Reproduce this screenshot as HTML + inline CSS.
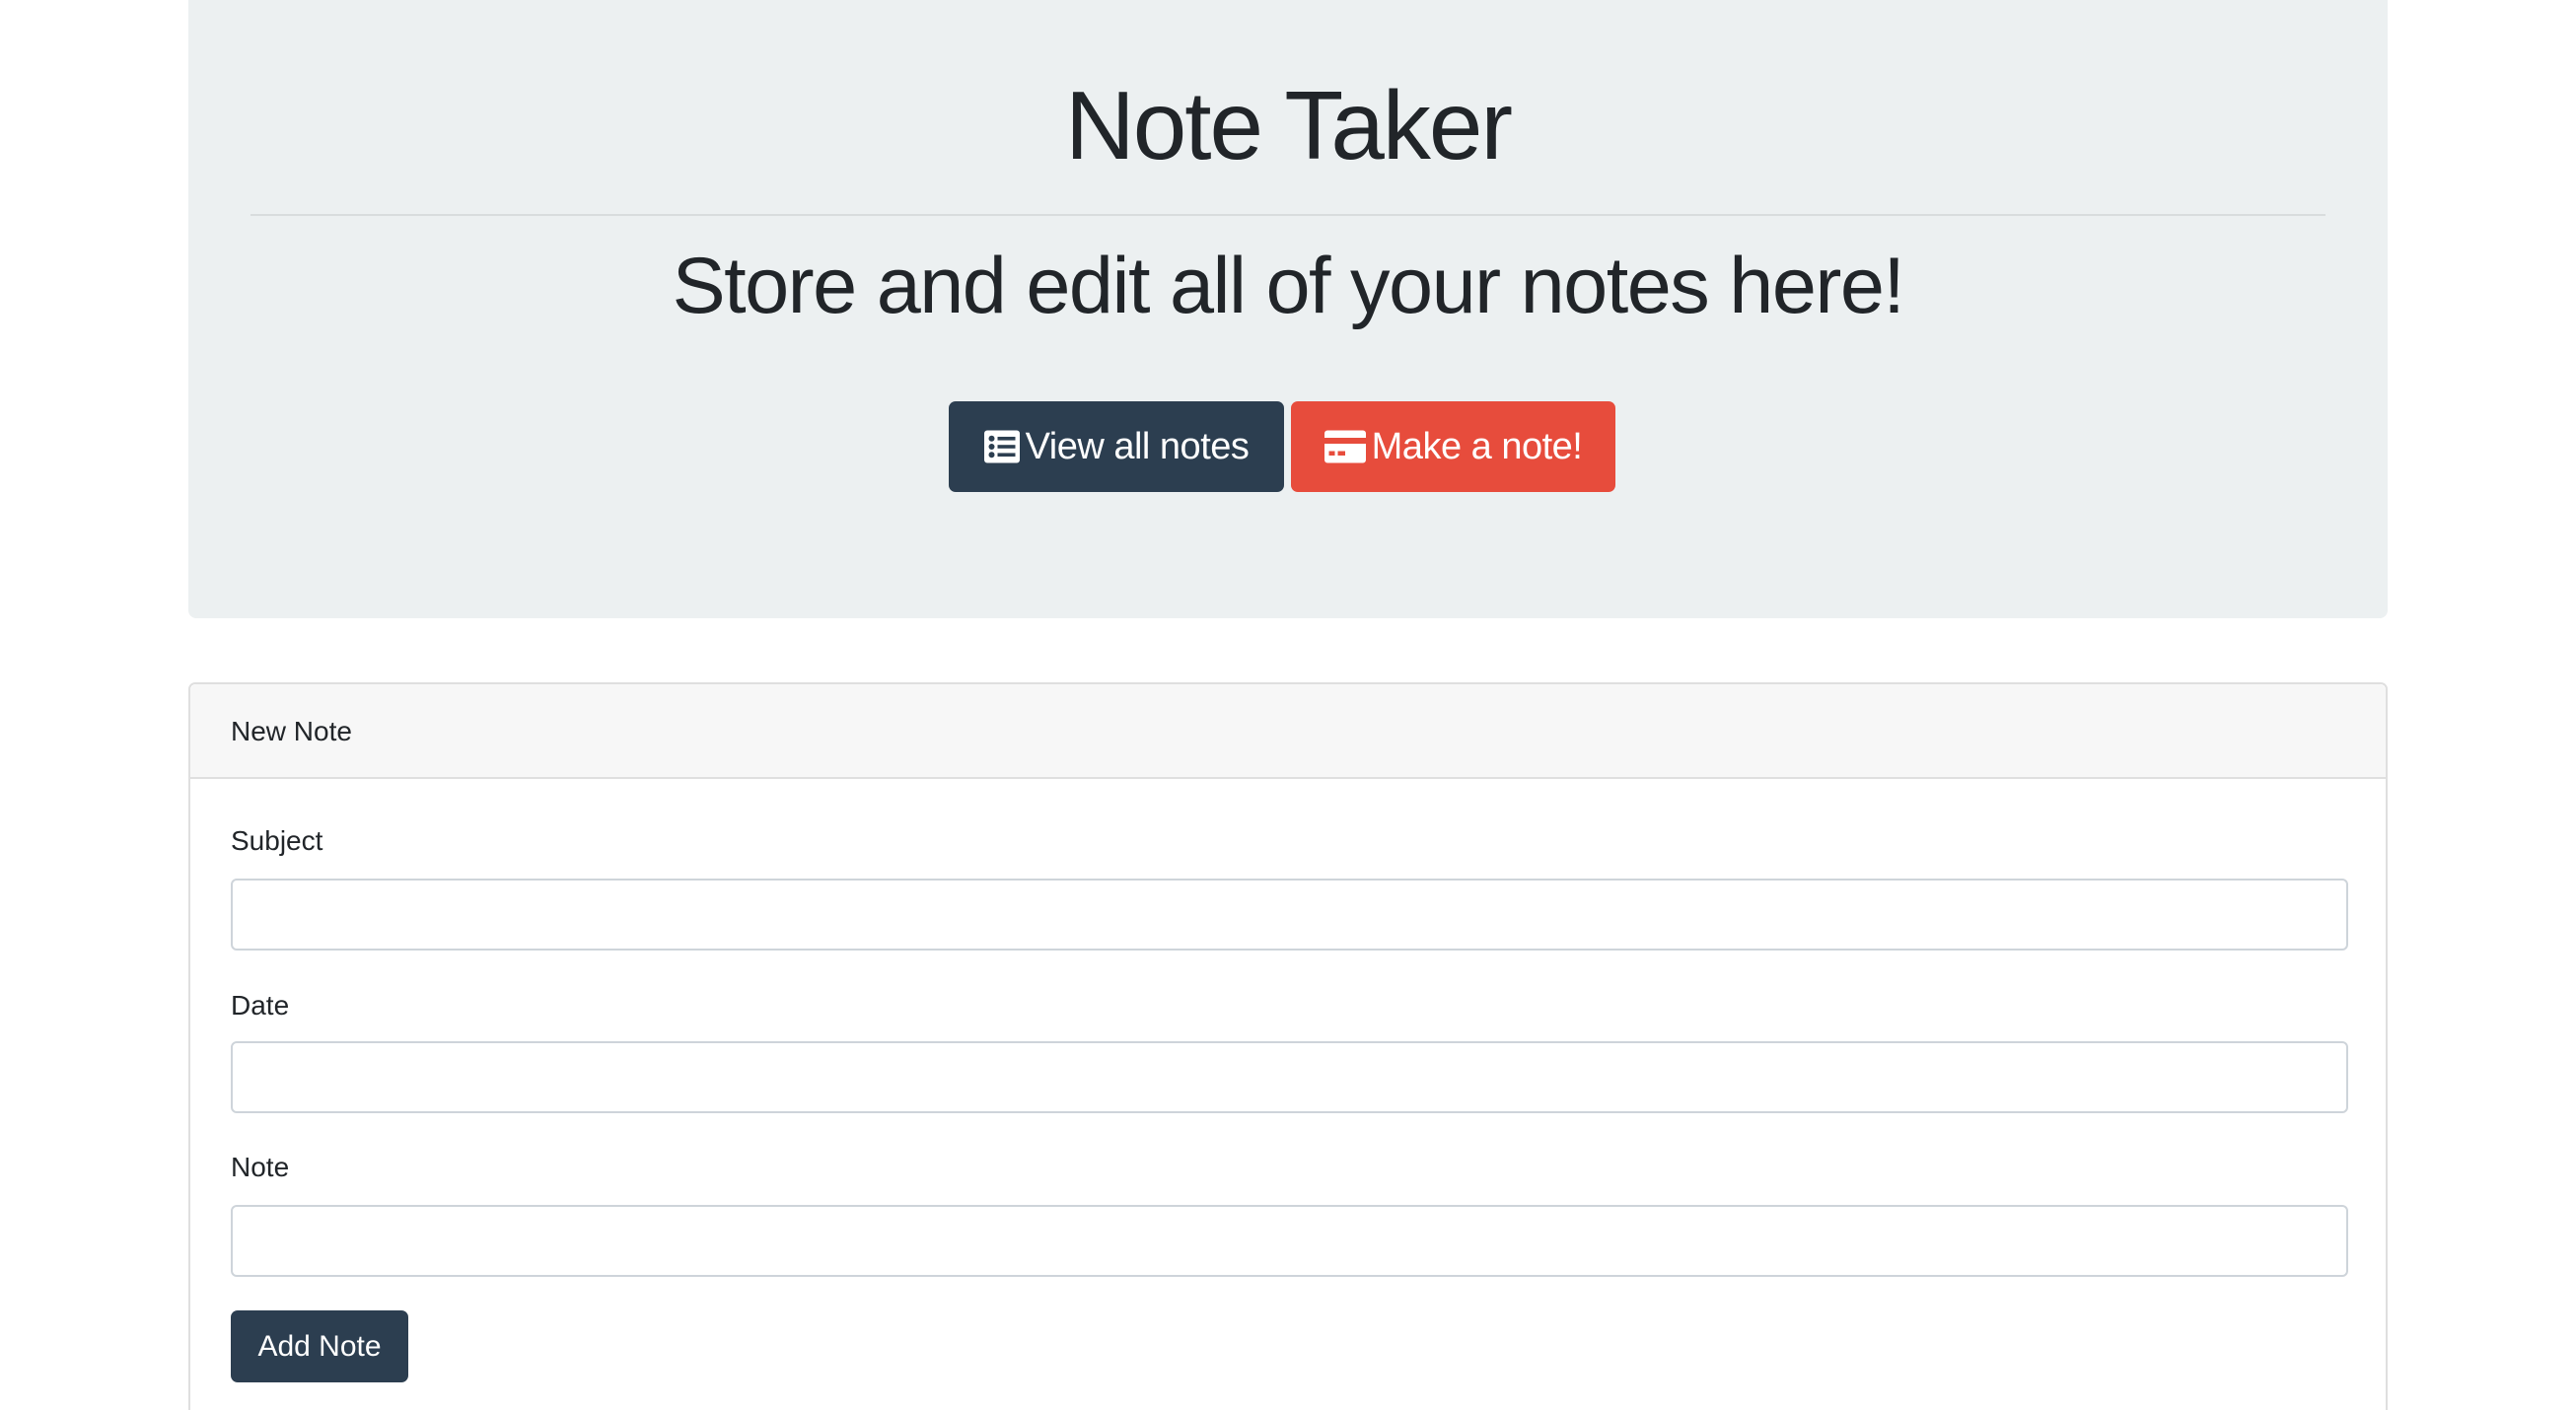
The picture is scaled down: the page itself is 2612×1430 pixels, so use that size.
<!DOCTYPE html>
<html><head><meta charset="utf-8"><style>
*{box-sizing:border-box;margin:0;padding:0}
html,body{width:2612px;height:1430px;overflow:hidden}
body{background:#fff;font-family:"Liberation Sans",sans-serif;color:#212529;position:relative}
.jumbo{position:absolute;left:191px;top:0;width:2230px;height:627px;background:#ecf0f1;border-radius:0 0 8px 8px}
h1{position:absolute;left:0;right:0;top:78px;text-align:center;font-weight:400;font-size:98px;letter-spacing:-2px;line-height:1}
.hr{position:absolute;left:63px;right:63px;top:217px;height:2px;background:#d8dcdd}
h2{position:absolute;left:0;right:0;top:250px;text-align:center;font-weight:400;font-size:81px;letter-spacing:-1.5px;line-height:1}
.btn{position:absolute;top:407px;height:92px;border-radius:7px;color:#fff;font-size:38px;display:flex;align-items:center;justify-content:center;gap:6px;letter-spacing:-0.5px}
.b1{left:771px;width:340px;background:#2c3e50}
.b2{left:1118px;width:329px;background:#e74c3c}
.card{position:absolute;left:191px;top:692px;width:2230px;height:800px;border:2px solid #dfdfdf;border-radius:7px;background:#fff}
.ch{height:96px;background:#f7f7f7;border-bottom:2px solid #dfdfdf;border-radius:7px 7px 0 0;padding-left:41px;font-size:28px;line-height:96px}
.lab{position:absolute;left:41px;font-size:28px}
.inp{position:absolute;left:41px;width:2147px;height:73px;border:2px solid #ced4da;border-radius:6px}
.add{position:absolute;left:41px;top:635px;width:180px;height:73px;background:#2c3e50;color:#fff;border-radius:7px;font-size:30px;display:flex;align-items:center;justify-content:center}
</style></head><body>
<div class="jumbo">
<h1>Note Taker</h1>
<div class="hr"></div>
<h2>Store and edit all of your notes here!</h2>
<div class="btn b1"><svg width="36" height="34" viewBox="0 0 24 22"><rect x="0" y="0" width="24" height="22" rx="2" fill="#fff"/><g fill="#2c3e50"><circle cx="5" cy="5.5" r="2"/><circle cx="5" cy="11" r="2"/><circle cx="5" cy="16.5" r="2"/><rect x="9" y="4.3" width="12" height="2.4"/><rect x="9" y="9.8" width="12" height="2.4"/><rect x="9" y="15.3" width="12" height="2.4"/></g></svg>View all notes</div>
<div class="btn b2"><svg width="42" height="34" viewBox="0 0 28 22"><rect x="0" y="0" width="28" height="22" rx="2" fill="#fff"/><rect x="0" y="5" width="28" height="4" fill="#e74c3c"/><rect x="3" y="14" width="4" height="3" fill="#e74c3c"/><rect x="9" y="14" width="5" height="3" fill="#e74c3c"/></svg>Make a note!</div>
</div>
<div class="card">
<div class="ch">New Note</div>
<div class="lab" style="top:143px">Subject</div>
<div class="inp" style="top:197px"></div>
<div class="lab" style="top:310px">Date</div>
<div class="inp" style="top:362px"></div>
<div class="lab" style="top:474px">Note</div>
<div class="inp" style="top:528px"></div>
<div class="add">Add Note</div>
</div>
</body></html>
